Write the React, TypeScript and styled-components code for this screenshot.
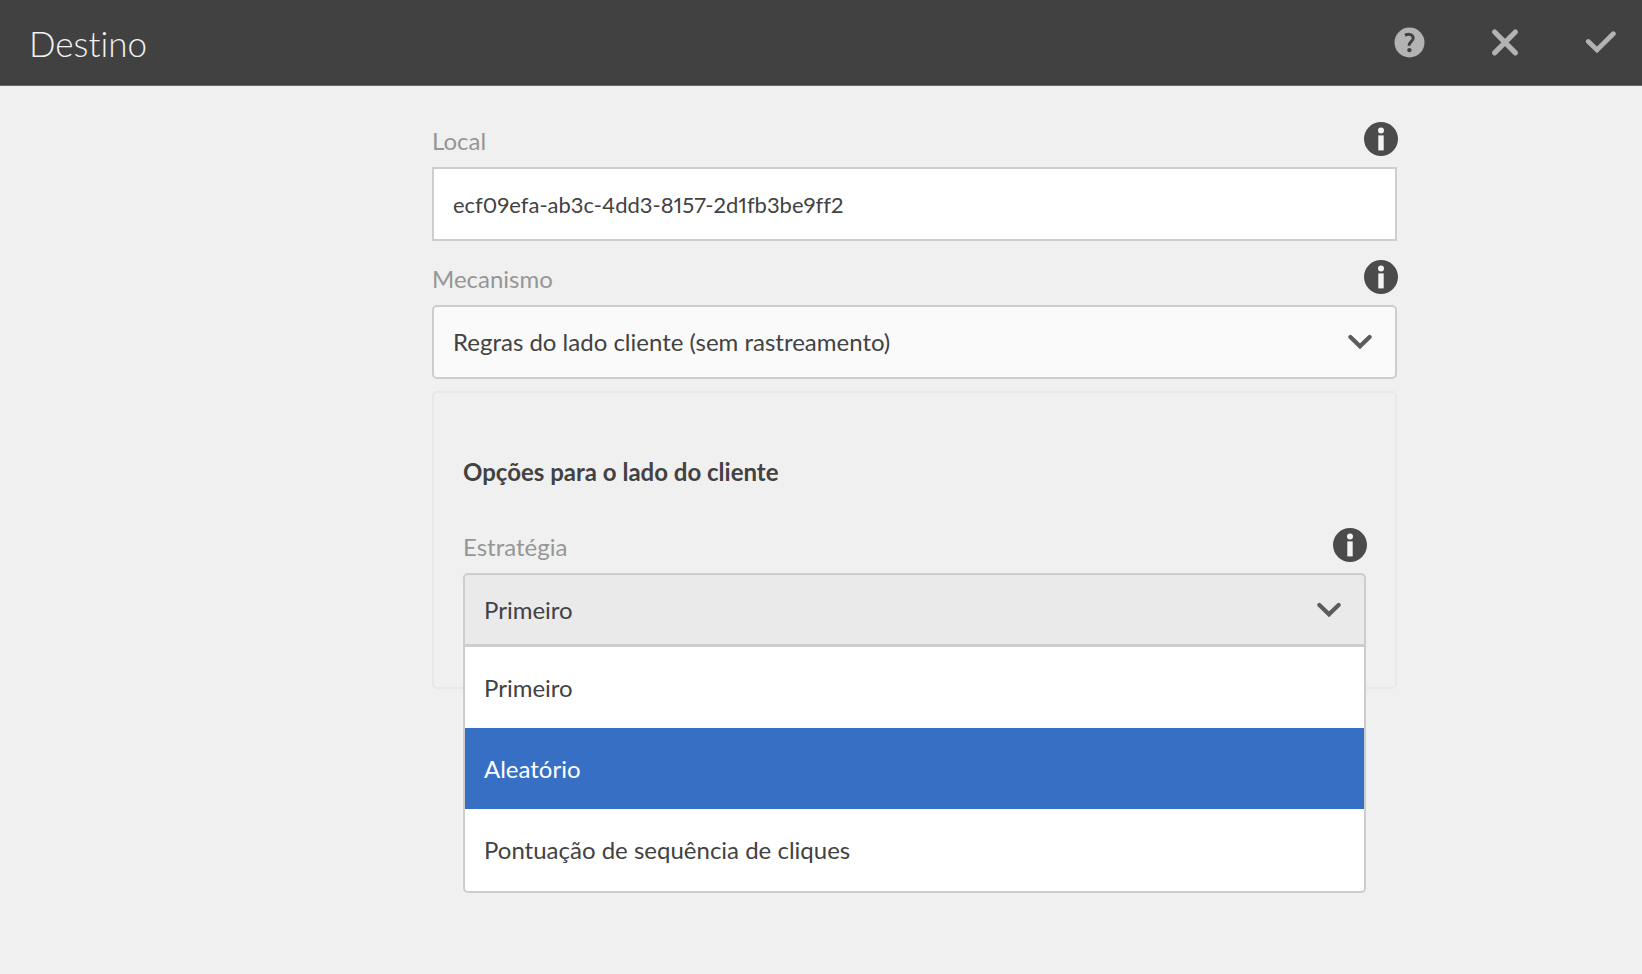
import { useState } from "react";
import styled, { createGlobalStyle, css } from "styled-components";

const GlobalStyle = createGlobalStyle`
  * { box-sizing: border-box; }
  body {
    margin: 0;
    min-height: 100vh;
    background: #f0f0f0;
    color: #424242;
    font-family: Lato, "Open Sans", sans-serif;
    font-size: 24px;
    line-height: 32px;
    font-variant-ligatures: none;
  }
`;

const Header = styled.header`
  display: flex;
  align-items: center;
  justify-content: space-between;
  height: 86px;
  padding: 0 25px 0 29px;
  background: #414141;
  border-bottom: 1px solid #6b6969;
`;

const Title = styled.h1`
  margin: 0;
  font-size: 35px;
  font-weight: 300;
  line-height: 44px;
  color: #f2f2f2;
`;

const Actions = styled.div`
  display: flex;
  gap: 64px;
`;

const IconButton = styled.button`
  display: flex;
  width: 32px;
  height: 32px;
  padding: 0;
  border: 0;
  background: none;
  color: #b3b3b3;
  cursor: pointer;
`;

const Page = styled.main`
  display: grid;
  grid-template-columns: 432fr 965fr 245fr;
  padding: 36px 0 80px;
`;

const Form = styled.form`
  grid-column: 2;
  min-width: 0;
`;

const Field = styled.div`
  & + & {
    margin-top: 19px;
  }
`;

const FieldHead = styled.div`
  display: flex;
  align-items: center;
  justify-content: space-between;
  height: 34px;
  margin-bottom: 11px;
`;

const Label = styled.label`
  padding-top: 4px;
  color: #969696;
`;

const InfoButton = styled.button`
  display: flex;
  width: 34px;
  height: 34px;
  margin-right: -1px;
  padding: 0;
  border: 0;
  background: none;
  color: #4b4b4b;
  cursor: pointer;
`;

const control = css`
  display: block;
  width: 100%;
  height: 74px;
  padding: 0 19px;
  border: 2px solid #cdcdcd;
  color: #424242;
  font: inherit;
  outline: none;
`;

const TextInput = styled.input`
  ${control}
  font-size: 22px;
  font-variant-numeric: proportional-nums;
  border-radius: 0;
  background: #fff;
`;

const SelectWrap = styled.div`
  position: relative;
`;

const Select = styled.select<{ $open?: boolean }>`
  ${control}
  appearance: none;
  border-radius: ${(p) => (p.$open ? "5px 5px 0 0" : "5px")};
  border-bottom-width: ${(p) => (p.$open ? "3px" : "2px")};
  background: ${(p) => (p.$open ? "#eaeaea" : "#fafafa")};
`;

const Chevron = styled.svg`
  position: absolute;
  top: 29px;
  right: 25px;
  width: 24px;
  height: 16px;
  pointer-events: none;
`;

const Menu = styled.ul`
  position: absolute;
  top: 100%;
  left: 0;
  right: 0;
  margin: 0;
  padding: 0 0 1px;
  list-style: none;
  border: 2px solid #cdcdcd;
  border-top: 0;
  border-radius: 0 0 5px 5px;
  background: #fff;
  overflow: hidden;
`;

const MenuItem = styled.li<{ $active: boolean }>`
  display: flex;
  align-items: center;
  height: 81px;
  padding: 0 19px;
  background: ${(p) => (p.$active ? "#366fc4" : "#fff")};
  color: ${(p) => (p.$active ? "#fff" : "#424242")};
  cursor: pointer;
`;

const Panel = styled.section`
  margin-top: 12px;
  padding: 63px 29px 40px;
  border: 2px solid #e8e8e8;
  border-radius: 5px;
`;

const PanelTitle = styled.h2`
  margin: 0 0 40px;
  font-size: 24px;
  font-weight: 700;
  line-height: 32px;
`;

const InfoIcon = () => (
  <svg viewBox="0 0 34 34" width="34" height="34" aria-hidden="true">
    <circle cx="17" cy="17" r="17" fill="currentColor" />
    <circle cx="17" cy="8.6" r="3" fill="#f4f4f4" />
    <rect x="14.3" y="13.4" width="5.4" height="15" fill="#f4f4f4" />
  </svg>
);

const HelpIcon = () => (
  <svg viewBox="0 0 32 32" width="32" height="32" aria-hidden="true">
    <circle cx="16.5" cy="15.5" r="15" fill="currentColor" />
    <path d="M12 8.300c3.500-1.800 8.200-1 8.200 2.700 0 3.700-4.200 3.700-4.200 7.700" fill="none" stroke="#414141" strokeWidth="3" />
    <circle cx="16.400" cy="23.100" r="2.200" fill="#414141" />
  </svg>
);

const CloseIcon = () => (
  <svg viewBox="0 0 32 32" width="32" height="32" aria-hidden="true">
    <path d="M5.600 5L26.400 25.800M26.400 5L5.600 25.800" stroke="currentColor" strokeWidth="5.200" strokeLinecap="round" />
  </svg>
);

const CheckIcon = () => (
  <svg viewBox="0 0 32 32" width="32" height="32" aria-hidden="true">
    <path d="M3.300 14.500L12 23L28.300 6.700" fill="none" stroke="currentColor" strokeWidth="4.800" strokeLinecap="round" />
  </svg>
);

const ChevronIcon = () => (
  <Chevron viewBox="0 0 24 16" aria-hidden="true">
    <path d="M2.400 3L12 12.300L21.600 3" fill="none" stroke="#5c5c5c" strokeWidth="4.200" strokeLinecap="round" />
  </Chevron>
);

const strategies = ["Primeiro", "Aleatório", "Pontuação de sequência de cliques"];

function FieldLabel({ id, text }: { id: string; text: string }) {
  return (
    <FieldHead>
      <Label htmlFor={id}>{text}</Label>
      <InfoButton type="button" aria-label={`Informações: ${text}`}>
        <InfoIcon />
      </InfoButton>
    </FieldHead>
  );
}

export default function App() {
  const [location, setLocation] = useState("ecf09efa-ab3c-4dd3-8157-2d1fb3be9ff2");
  const [strategy, setStrategy] = useState(strategies[0]);
  const [active, setActive] = useState(strategies[1]);

  return (
    <>
      <GlobalStyle />
      <Header>
        <Title>Destino</Title>
        <Actions>
          <IconButton type="button" aria-label="Ajuda"><HelpIcon /></IconButton>
          <IconButton type="button" aria-label="Cancelar"><CloseIcon /></IconButton>
          <IconButton type="submit" form="target-form" aria-label="Concluído"><CheckIcon /></IconButton>
        </Actions>
      </Header>
      <Page>
        <Form id="target-form" onSubmit={(e) => e.preventDefault()}>
          <Field>
            <FieldLabel id="location" text="Local" />
            <TextInput id="location" value={location} onChange={(e) => setLocation(e.target.value)} />
          </Field>
          <Field>
            <FieldLabel id="engine" text="Mecanismo" />
            <SelectWrap>
              <Select id="engine">
                <option>Regras do lado cliente (sem rastreamento)</option>
              </Select>
              <ChevronIcon />
            </SelectWrap>
          </Field>
          <Panel>
            <PanelTitle>Opções para o lado do cliente</PanelTitle>
            <Field>
              <FieldLabel id="strategy" text="Estratégia" />
              <SelectWrap>
                <Select id="strategy" $open value={strategy} onChange={(e) => setStrategy(e.target.value)}>
                  {strategies.map((s) => <option key={s}>{s}</option>)}
                </Select>
                <ChevronIcon />
                <Menu role="listbox" aria-label="Estratégia">
                  {strategies.map((s) => (
                    <MenuItem
                      key={s}
                      role="option"
                      aria-selected={s === strategy}
                      $active={s === active}
                      onMouseEnter={() => setActive(s)}
                      onClick={() => setStrategy(s)}
                    >
                      {s}
                    </MenuItem>
                  ))}
                </Menu>
              </SelectWrap>
            </Field>
          </Panel>
        </Form>
      </Page>
    </>
  );
}
